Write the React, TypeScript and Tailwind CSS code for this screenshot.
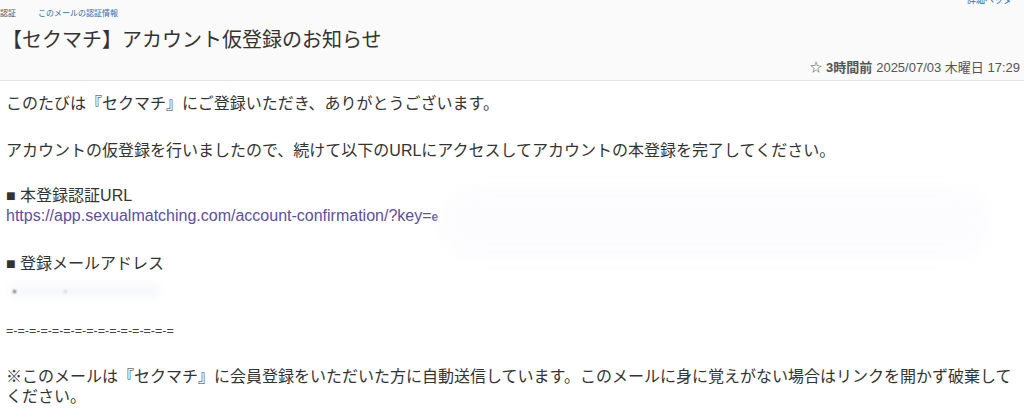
export default function App() {
  const font = "font-['Liberation_Sans','Noto_Sans_CJK_JP',sans-serif]";

  return (
    <div className={`relative w-[1024px] h-[408px] overflow-hidden bg-white text-[#333] ${font}`}>
      {/* Mail header */}
      <div className="h-[81px] bg-[#fafafa] border-b border-[#e4e4e4]">
        <div className="flex items-start justify-between h-[26px]">
          <div className="flex items-center pt-[9px] text-[8px] leading-[10px]">
            <span className="text-[#555]">認証</span>
            <span className="ml-[22px] text-[#2f6fae]">このメールの認証情報</span>
          </div>
          <span className="-mt-[5px] mr-[12px] text-[9px] leading-[10px] text-[#2f6fae]">詳細ヘッダ</span>
        </div>
        <h1 className="pl-[2px] text-[20px] leading-[28px] text-[#333]">
          【セクマチ】アカウント仮登録のお知らせ
        </h1>
        <div className="flex justify-end items-center gap-[4px] pr-[4px] mt-[6px] text-[13px] leading-[16px] text-[#555]">
          <span className="text-[12px]">☆</span>
          <span className="font-bold">3時間前</span>
          <span>2025/07/03 木曜日 17:29</span>
        </div>
      </div>

      {/* Mail body */}
      <div className="pl-[6px] pr-[4px] pt-[13px] text-[16px] leading-[20px]">
        <div>このたびは『セクマチ』にご登録いただき、ありがとうございます。</div>
        <div className="mt-[27px]">
          アカウントの仮登録を行いましたので、続けて以下のURLにアクセスしてアカウントの本登録を完了してください。
        </div>
        <div className="mt-[25px]">■ 本登録認証URL</div>
        <div className="text-[#5b4ea6]">
          https://app.sexualmatching.com/account-confirmation/?key=<span className="font-bold text-[12px]">e</span>
        </div>
        <div className="mt-[27px]">■ 登録メールアドレス</div>
        <div className="relative mt-[7px] h-[20px]">
          <div className="absolute left-[4px] top-[4px] w-[150px] h-[12px] rounded-full bg-[#f6f7fa] blur-[4px]" />
          <div className="absolute left-[7px] top-[9px] w-[3px] h-[3px] rounded-full bg-[#3a4660] blur-[1px]" />
          <div className="absolute left-[58px] top-[9px] w-[3px] h-[3px] rounded-full bg-[#c3cadb] blur-[1px]" />
        </div>
        <div className="mt-[20px] text-[12.5px] leading-[20px] text-[#444]">=-=-=-=-=-=-=-=-=-=-=-=-=-=-=</div>
        <div className="mt-[26px]">
          ※このメールは『セクマチ』に会員登録をいただいた方に自動送信しています。このメールに身に覚えがない場合はリンクを開かず破棄してください。
        </div>
      </div>

      {/* redaction smear over the key */}
      <div className="absolute left-[440px] top-[188px] w-[550px] h-[70px] rounded-[40px] bg-[#fcfcfe] blur-[8px]" />
    </div>
  );
}
